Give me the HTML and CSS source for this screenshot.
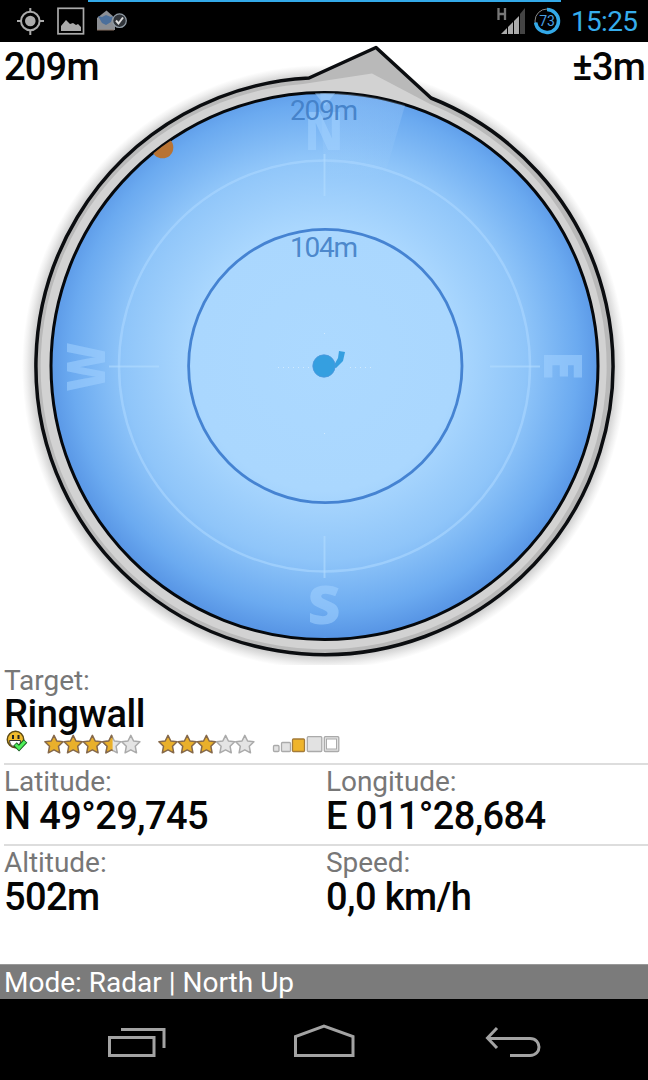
FILE: index.html
```html
<!DOCTYPE html>
<html lang="en">
<head>
<meta charset="utf-8">
<title>Radar</title>
<link rel="stylesheet" href="styles.css">
</head>
<body>
<div class="screen">
  <header class="status">
    <svg class="status-icons" width="140" height="42" viewBox="0 0 140 42">
      <g fill="none" stroke="#aaa" stroke-width="2"><circle cx="30.3" cy="21" r="9.3"/><path d="M30.3 8v4M30.3 30v5M17 21h4M39 21h5"/></g>
      <circle cx="30.3" cy="21" r="5.3" fill="#aaa"/>
      <rect x="58" y="8.300" width="25.500" height="25.500" fill="none" stroke="#aaa" stroke-width="1.700"/>
      <path d="M61 31v-5l5-6 4 4 3-1 3 2 2-1 3 3v4z" fill="#aaa"/>
      <path d="M97 18l9.500-7.500L115 18v12H97z" fill="#8c8f94"/>
      <path d="M98 16l4 1 4-2 5 2 2-1-2 6-5 3-4-2z" fill="#4b6f9b"/>
      <path d="M97 30h17" stroke="#8b7567"/>
      <circle cx="119.500" cy="20.700" r="6.800" fill="#303439" stroke="#929da7" stroke-width="1.200"/>
      <path d="M116 20.500l2.500 3 4.500-6" fill="none" stroke="#ddd" stroke-width="2"/>
    </svg>
    <svg class="status-signal" width="68" height="42" viewBox="0 0 68 42">
      <path d="M3.500 8v12M10 8v12M3.500 14h6.500" stroke="#777" stroke-width="2.300"/>
      <path d="M6 34l6-6v6z" fill="#aaa"/><path d="M13 27l5-5v12h-5z" fill="#aaa"/><path d="M19 21l5-5v18h-5z" fill="#aaa"/><path d="M25 14l5-6v26h-5z" fill="#444"/>
      <circle cx="52" cy="21" r="12" fill="none" stroke="#888" stroke-width="1"/>
      <path d="M52 9.500a11.500 11.500 0 1 1-11.400 13" fill="none" stroke="#33a9e8" stroke-width="3.500"/>
      <text x="52" y="26.300" class="battery-text">73</text>
    </svg>
    <span class="clock">15:25</span>
    <div class="progress"></div>
  </header>

  <main class="radar">
    <svg class="compass" width="648" height="623" viewBox="0 42 648 623">
      <defs>
        <radialGradient id="face" gradientUnits="userSpaceOnUse" cx="324.500" cy="358" r="288">
          <stop offset="0" stop-color="#acd9ff"/><stop offset=".46" stop-color="#aad7fe"/><stop offset=".7" stop-color="#8fc5f9"/><stop offset=".88" stop-color="#6baaf0"/><stop offset="1" stop-color="#518ee1"/>
        </radialGradient>
        <radialGradient id="halo" gradientUnits="userSpaceOnUse" cx="324" cy="367" r="302">
          <stop offset=".93" stop-color="#999"/><stop offset=".96" stop-color="#d0d0d0"/><stop offset=".985" stop-color="#f0f0f0"/><stop offset="1" stop-color="#fff"/>
        </radialGradient>
        <linearGradient id="beam" x1="0" y1="0" x2="0" y2="1"><stop offset="0" stop-color="#b9dcff" stop-opacity=".3"/><stop offset="1" stop-color="#b9dcff" stop-opacity="0"/></linearGradient>
        <clipPath id="dial"><circle cx="324.500" cy="366" r="273"/></clipPath>
      </defs>
      <circle cx="324" cy="367" r="302" fill="url(#halo)"/>
      <path d="M309 78A288.500 288.500 0 1 0 431 98L376 47.500Z" fill="#b9b9b9" stroke="#0b0d10" stroke-width="3.500" stroke-linejoin="round"/>
      <path d="M303 84A283 283 0 1 0 430 104L372 73.500Z" fill="#d2d2d2"/>
      <circle cx="324.500" cy="366" r="273.500" fill="url(#face)" stroke="#05080c" stroke-width="3"/>
      <g clip-path="url(#dial)">
        <path d="M320 88H410L384 178H324.500Z" fill="url(#beam)"/>
        <path d="M314 92h22l-11 14z" fill="#a5d3ff" opacity=".5"/>
        <circle cx="162.500" cy="147.500" r="10.800" fill="#b87333"/>
      </g>
      <circle cx="324.500" cy="366" r="205.500" fill="none" stroke="#a9d6ff" stroke-opacity=".65" stroke-width="2.500"/>
      <path d="M324.500 154v42M324.500 536v42M109 366.500h50M490 366.500h50" stroke="#b2dcff" stroke-opacity=".6" stroke-width="2"/>
      <path d="M278 367.500h33M350 367.500h21M324.500 333v2M324.500 433v2" stroke="#d2ebff" stroke-width="1" stroke-dasharray="1 4"/>
      <g class="cardinals">
        <text x="324" y="150" textLength="39" lengthAdjust="spacingAndGlyphs">N</text>
        <text x="324" y="624" textLength="33" lengthAdjust="spacingAndGlyphs">S</text>
        <text transform="translate(543.500 365.500) rotate(90)" x="0" y="0" textLength="29" lengthAdjust="spacingAndGlyphs">E</text>
        <text transform="translate(105 367) rotate(-90)" x="0" y="0" textLength="49" lengthAdjust="spacingAndGlyphs">W</text>
      </g>
      <circle cx="325.300" cy="366" r="136.700" fill="none" stroke="#4583d2" stroke-width="2.800"/>
      <g class="distance">
        <text x="324" y="120" textLength="68">209m</text>
        <text x="324" y="256.500" textLength="68">104m</text>
      </g>
      <path d="M333 367l5-9 1-7 6 1-2 9-7 7z" fill="#359fe0"/>
      <circle cx="324" cy="366" r="11.200" fill="#359fe0" stroke="#4d97dc" stroke-width=".8"/>
    </svg>
    <span class="readout readout-left">209m</span>
    <span class="readout readout-right">±3m</span>
  </main>

  <section class="target">
    <div class="label">Target:</div>
    <div class="value">Ringwall</div>
    <svg class="ratings" width="345" height="28" viewBox="0 728 345 28">
      <defs>
        <path id="star" d="M0-9.200L2.800-3.500 9.100-2.700 4.500 1.800 5.700 8.300 0 5.300-5.700 8.300-4.500 1.800-9.100-2.700-2.800-3.500Z" stroke-width="1.500" stroke-linejoin="round"/>
        <clipPath id="half"><path d="M-11-11H1V11H-11Z"/></clipPath>
      </defs>
      <circle cx="15.500" cy="739.500" r="8.200" fill="#f0bb2c" stroke="#5d4a13" stroke-width="1.500"/>
      <path d="M13 735v4M18.500 735v4" stroke="#222" stroke-width="2"/>
      <path d="M9.500 740.500h11c0 4-2 6-5.500 6s-5-2-5.500-6z" fill="#fff" stroke="#333"/>
      <path d="M15 744l4 4 6.500-7" fill="none" stroke="#185c20" stroke-width="5"/>
      <path d="M15.500 744.500l3.500 3.500 6-6.500" fill="none" stroke="#4ff05a" stroke-width="3"/>
      <g fill="#e9b02b" stroke="#85684a">
        <use href="#star" x="54" y="744.500"/><use href="#star" x="73.200" y="744.500"/><use href="#star" x="92.400" y="744.500"/>
        <use href="#star" x="168" y="744.500"/><use href="#star" x="187.200" y="744.500"/><use href="#star" x="206.400" y="744.500"/>
      </g>
      <g fill="#e4e4e4" stroke="#aaa">
        <use href="#star" x="111.600" y="744.500"/><use href="#star" x="130.800" y="744.500"/>
        <use href="#star" x="225.600" y="744.500"/><use href="#star" x="244.800" y="744.500"/>
      </g>
      <g transform="translate(111.600 744.500)" clip-path="url(#half)" fill="#e9b02b" stroke="#85684a"><use href="#star"/></g>
      <g fill="#e2e2e2" stroke="#aaa" stroke-width="1.300">
        <rect x="273.500" y="745.500" width="5.500" height="6" rx="1"/>
        <rect x="281.500" y="742.500" width="9" height="9" rx="1"/>
        <rect x="292.500" y="739" width="12" height="12.500" rx="1" fill="#efb42b" stroke="#a47b39"/>
        <rect x="307.300" y="736.700" width="14.500" height="14.800" rx="1"/>
        <rect x="324.300" y="736.700" width="14.500" height="14.800" rx="1"/>
        <rect x="326.500" y="739" width="10" height="10" fill="#fff" stroke-width="1"/>
      </g>
    </svg>
  </section>

  <section class="row">
    <div class="cell"><div class="label">Latitude:</div><div class="value">N 49°29,745</div></div>
    <div class="cell"><div class="label">Longitude:</div><div class="value">E 011°28,684</div></div>
  </section>
  <section class="row">
    <div class="cell"><div class="label">Altitude:</div><div class="value">502m</div></div>
    <div class="cell"><div class="label">Speed:</div><div class="value">0,0 km/h</div></div>
  </section>

  <footer class="mode">Mode: Radar | North Up</footer>
  <nav class="nav">
    <svg width="648" height="81" viewBox="0 999 648 81" fill="none" stroke="#a3a3a3" stroke-width="3">
      <path d="M109.500 1037.500h44.500v18h-44.500zM121 1029.500h43v18.500"/>
      <path d="M295.500 1055.500v-19l28.500-10.500 29 10.500v19z"/>
      <path d="M497 1028l-9.500 10 9.500 10M488 1038.500h42c12 0 12 17 0 17h-20"/>
    </svg>
  </nav>
</div>
</body>
</html>
```
FILE: styles.css
```css
body { margin: 0; background: #fff; font-family: Roboto, "Liberation Sans", sans-serif; }
svg { display: block; }
.screen { width: 648px; height: 1080px; display: flex; flex-direction: column; overflow: hidden; background: #fff; }
.status { height: 42px; flex: none; background: #000; display: flex; align-items: center; position: relative; }
.status-signal { margin-left: auto; }
.clock { width: 77px; margin-left: 8px; padding-top: 2px; color: #36adeb; font-size: 28px; line-height: 40px; letter-spacing: -.7px; white-space: nowrap; }
.progress { position: absolute; left: 88px; top: 0; width: 473px; height: 2px; background: #33a9e8; }
.battery-text { font-size: 14px; fill: #4a9fe0; text-anchor: middle; }
.radar { height: 623px; flex: none; position: relative; }
.readout { position: absolute; top: 3px; font-size: 38px; line-height: 44px; font-weight: 500; letter-spacing: -.8px; color: #050505; }
.readout-left { left: 4px; }
.readout-right { right: 3px; }
.cardinals text { font: 800 53px "Open Sans", sans-serif; fill: #a3d2ff; fill-opacity: .55; text-anchor: middle; }
.distance text { font-size: 28px; fill: #407dc5; fill-opacity: .9; text-anchor: middle; }
.label { font-size: 28px; line-height: 32px; letter-spacing: -.05px; color: #777; white-space: nowrap; }
.value { font-size: 38px; line-height: 36px; font-weight: 500; letter-spacing: -.6px; color: #050505; white-space: nowrap; }
.target { height: 98px; flex: none; box-sizing: border-box; }
.target .label, .target .value { padding-left: 4px; }
.target .value { height: 31px; line-height: 34px; letter-spacing: -.4px; }
.row { height: 81px; flex: none; box-sizing: border-box; border-top: 2px solid #ddd; display: grid; grid-template-columns: 322px 1fr; padding-top: 1px; margin-left: 4px; }
.mode { margin-top: auto; height: 35px; flex: none; box-sizing: border-box; border-top: 1px solid #999; padding: 1px 4px; font-size: 28px; line-height: 34px; background: #7b7b7b; color: #fff; }
.nav { height: 81px; flex: none; background: #000; }
```
